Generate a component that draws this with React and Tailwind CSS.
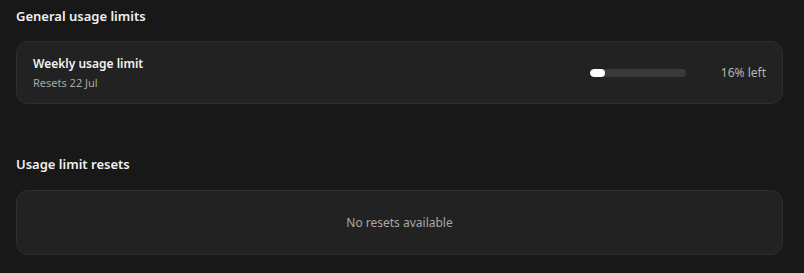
export default function App() {
  return (
    <div className="w-[804px] h-[273px] bg-[#181818] overflow-hidden" style={{ fontFamily: '"Noto Sans", "Open Sans", sans-serif' }}>
      <div className="w-[767px] ml-4">
        <h2 className="pt-[6px] text-[13px] leading-[20px] font-semibold text-[#f0f0f0]">General usage limits</h2>
        <div className="mt-[15px] h-[63px] rounded-xl border border-[#2e2e2e] bg-[#222222] flex items-center pl-4 pr-4">
          <div className="flex-1 flex flex-col">
            <span className="text-[12px] leading-[17px] font-semibold text-[#f2f2f2]">Weekly usage limit</span>
            <span className="mt-[3px] text-[11px] leading-[15px] text-[#a8a8a8]">Resets 22 Jul</span>
          </div>
          <div className="w-[96px] h-[8px] rounded-full bg-[#3a3a3a] overflow-hidden">
            <div className="h-full rounded-full bg-white" style={{ width: '16%' }} />
          </div>
          <span className="w-[80px] text-right text-[12px] text-[#b4b4b4]">16% left</span>
        </div>
        <h2 className="mt-[50px] text-[13px] leading-[20px] font-semibold text-[#f0f0f0]">Usage limit resets</h2>
        <div className="mt-[16px] h-[65px] rounded-xl border border-[#2e2e2e] bg-[#222222] flex items-center justify-center">
          <span className="text-[12px] text-[#a8a8a8]">No resets available</span>
        </div>
      </div>
    </div>
  );
}
